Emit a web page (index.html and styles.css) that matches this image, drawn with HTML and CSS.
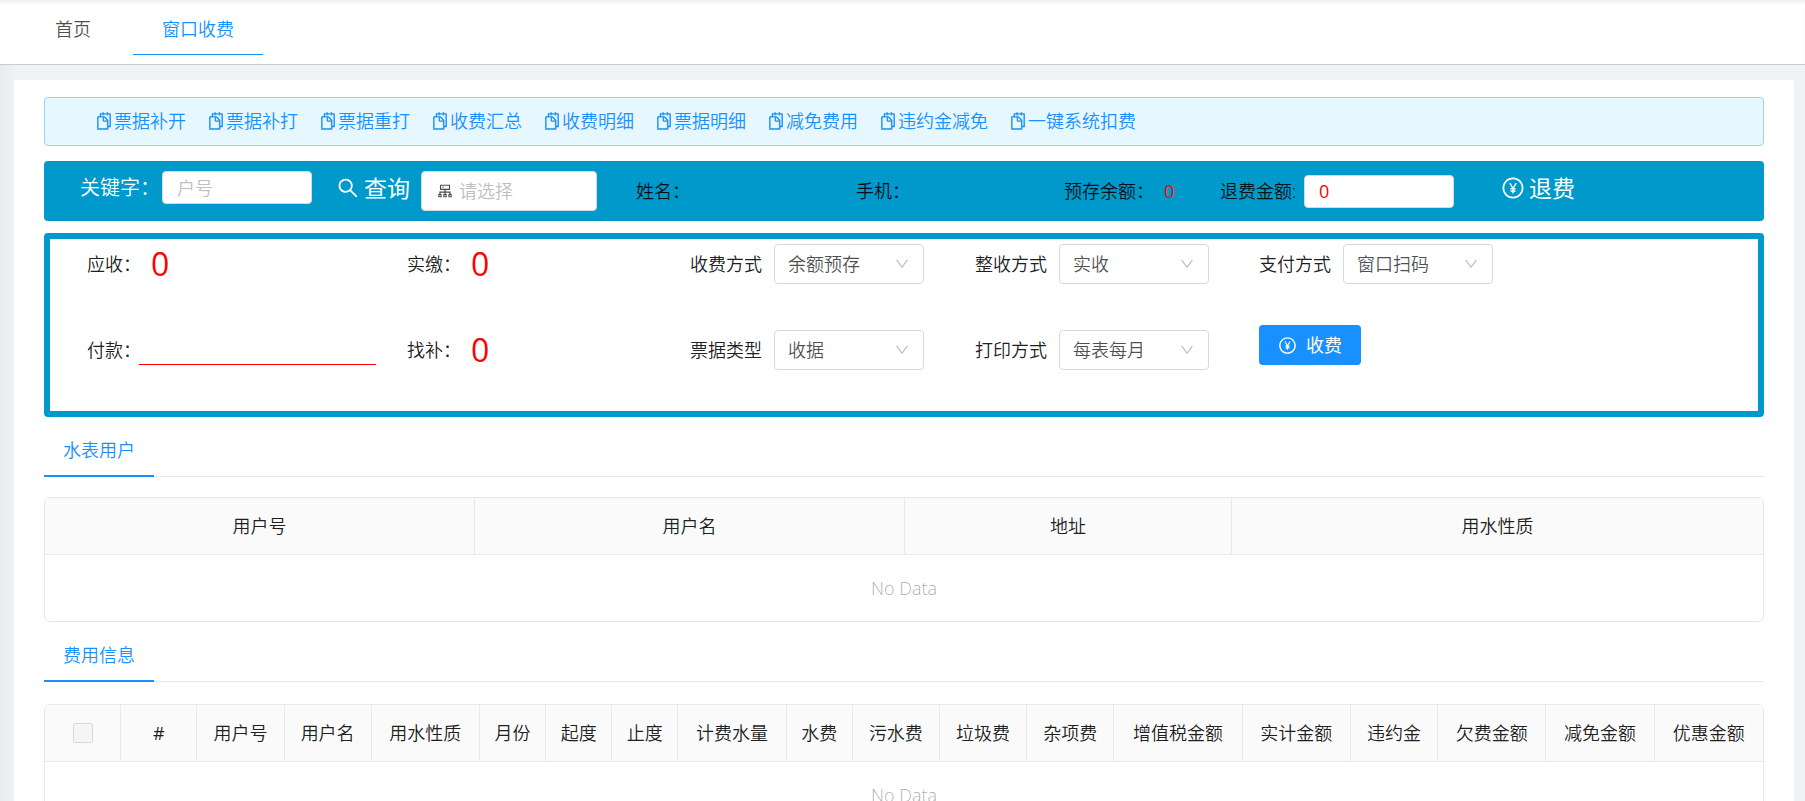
FILE: index.html
```html
<!DOCTYPE html>
<html lang="zh-CN">
<head>
<meta charset="utf-8">
<meta name="viewport" content="width=device-width, initial-scale=1">
<title>窗口收费</title>
<link rel="stylesheet" href="styles.css">
</head>
<body>
<svg class="sprite" aria-hidden="true">
  <symbol id="i-snippets" viewBox="0 0 1024 1024"><path d="M832 112H724V72c0-4.400-3.600-8-8-8h-56c-4.400 0-8 3.600-8 8v40H500V72c0-4.400-3.600-8-8-8h-56c-4.400 0-8 3.600-8 8v40H320c-17.700 0-32 14.300-32 32v120h-96c-17.700 0-32 14.300-32 32v632c0 17.700 14.300 32 32 32h512c17.700 0 32-14.300 32-32v-96h96c17.700 0 32-14.300 32-32V144c0-17.700-14.300-32-32-32zM664 888H232V336h218v174c0 22.100 17.900 40 40 40h174v338zm0-402H514V336h.2L664 485.800v.2zm128 274h-56V456L544 264H360v-80h68v32c0 4.400 3.600 8 8 8h56c4.400 0 8-3.600 8-8v-32h152v32c0 4.400 3.600 8 8 8h56c4.400 0 8-3.600 8-8v-32h68v576z"/></symbol>
  <symbol id="i-search" viewBox="0 0 1024 1024"><path d="M909.600 854.500L649.900 594.800C690.200 542.700 712 479 712 412c0-80.200-31.300-155.400-87.900-212.100-56.600-56.700-132-87.900-212.100-87.900s-155.500 31.300-212.100 87.900C143.200 256.500 112 331.800 112 412c0 80.100 31.300 155.500 87.900 212.100C256.500 680.800 331.800 712 412 712c67 0 130.600-21.800 182.700-62l259.700 259.600a8.200 8.200 0 0 0 11.600 0l43.600-43.500a8.200 8.200 0 0 0 0-11.600zM570.400 570.400C528 612.700 471.800 636 412 636s-116-23.300-158.400-65.600C211.300 528 188 471.800 188 412s23.300-116.100 65.600-158.400C296 211.300 352.200 188 412 188s116.100 23.200 158.400 65.600S636 352.200 636 412s-23.300 116.100-65.600 158.400z"/></symbol>
  <symbol id="i-cluster" viewBox="0 0 1024 1024"><path fill-rule="evenodd" d="M888 680h-54V540H546v-92h238c8.800 0 16-7.200 16-16V168c0-8.800-7.200-16-16-16H240c-8.800 0-16 7.200-16 16v264c0 8.800 7.200 16 16 16h238v92H190v140h-54c-4.400 0-8 3.600-8 8v176c0 4.400 3.600 8 8 8h176c4.400 0 8-3.600 8-8V688c0-4.400-3.600-8-8-8h-54v-72h220v72h-54c-4.400 0-8 3.600-8 8v176c0 4.400 3.600 8 8 8h176c4.400 0 8-3.600 8-8V688c0-4.400-3.600-8-8-8h-54v-72h220v72h-54c-4.400 0-8 3.600-8 8v176c0 4.400 3.600 8 8 8h176c4.400 0 8-3.600 8-8V688c0-4.400-3.600-8-8-8zM192 744h64v64h-64zM480 744h64v64h-64zM768 744h64v64h-64zM288 384V216h448v168H288z"/><circle cx="400" cy="300" r="40"/></symbol>
  <symbol id="i-pay" viewBox="0 0 1024 1024"><path d="M512 64C264.600 64 64 264.600 64 512s200.600 448 448 448 448-200.600 448-448S759.400 64 512 64zm0 820c-205.400 0-372-166.600-372-372s166.600-372 372-372 372 166.600 372 372-166.600 372-372 372z"/><path d="M372 300l140 226 140-226M512 526v218M404 546h216M404 640h216" fill="none" stroke="currentColor" stroke-width="58"/></symbol>
  <symbol id="i-down" viewBox="0 0 1024 1024"><path d="M884 256h-75c-5.100 0-9.900 2.500-12.900 6.600L512 654.200 227.900 262.600c-3-4.100-7.800-6.600-12.900-6.600h-75c-6.500 0-10.300 7.400-6.500 12.700l352.600 486.100c12.800 17.600 39 17.600 51.700 0l352.600-486.100c3.900-5.300.1-12.700-6.400-12.700z"/></symbol>
</svg>

<header class="topbar">
  <nav class="page-tabs">
    <a class="page-tab" href="#home">首页</a>
    <a class="page-tab is-active" href="#cashier">窗口收费</a>
  </nav>
</header>

<main class="content">
  <section class="card">
    <nav class="toolbar">
      <a class="tool" href="#t1"><svg class="icon-tool"><use href="#i-snippets"/></svg>票据补开</a>
      <a class="tool" href="#t2"><svg class="icon-tool"><use href="#i-snippets"/></svg>票据补打</a>
      <a class="tool" href="#t3"><svg class="icon-tool"><use href="#i-snippets"/></svg>票据重打</a>
      <a class="tool" href="#t4"><svg class="icon-tool"><use href="#i-snippets"/></svg>收费汇总</a>
      <a class="tool" href="#t5"><svg class="icon-tool"><use href="#i-snippets"/></svg>收费明细</a>
      <a class="tool" href="#t6"><svg class="icon-tool"><use href="#i-snippets"/></svg>票据明细</a>
      <a class="tool" href="#t7"><svg class="icon-tool"><use href="#i-snippets"/></svg>减免费用</a>
      <a class="tool" href="#t8"><svg class="icon-tool"><use href="#i-snippets"/></svg>违约金减免</a>
      <a class="tool" href="#t9"><svg class="icon-tool"><use href="#i-snippets"/></svg>一键系统扣费</a>
    </nav>

    <form class="query">
      <div class="query-item is-short">
        <label class="keyword-label" for="keyword">关键字：</label>
        <input class="input keyword-input" id="keyword" type="text" placeholder="户号">
      </div>
      <button class="action is-short" type="button"><svg class="icon-action"><use href="#i-search"/></svg>查询</button>
      <label class="picker"><svg class="icon-picker"><use href="#i-cluster"/></svg><input class="picker-input" type="text" placeholder="请选择" aria-label="请选择"></label>
      <div class="query-item">姓名：</div>
      <div class="query-item">手机：</div>
      <div class="query-item">预存余额：<span class="balance">0</span></div>
      <div class="query-item">
        <label class="refund-label" for="refund">退费金额:</label>
        <input class="input refund-input" id="refund" type="text" value="0">
      </div>
      <button class="action is-short" type="button"><svg class="icon-action"><use href="#i-pay"/></svg>退费</button>
    </form>

    <form class="payment">
      <div class="field">应收：<output class="amount">0</output></div>
      <div class="field">实缴：<output class="amount">0</output></div>
      <div class="field"><label class="field-label" for="s1">收费方式</label><span class="select-box"><select class="select" id="s1"><option>余额预存</option></select><svg class="icon-down"><use href="#i-down"/></svg></span></div>
      <div class="field"><label class="field-label" for="s2">整收方式</label><span class="select-box"><select class="select" id="s2"><option>实收</option></select><svg class="icon-down"><use href="#i-down"/></svg></span></div>
      <div class="field"><label class="field-label" for="s3">支付方式</label><span class="select-box"><select class="select" id="s3"><option>窗口扫码</option></select><svg class="icon-down"><use href="#i-down"/></svg></span></div>

      <div class="field"><label class="paid-label" for="paid">付款：</label><input class="paid-input" id="paid" type="text"></div>
      <div class="field">找补：<output class="amount">0</output></div>
      <div class="field"><label class="field-label" for="s4">票据类型</label><span class="select-box"><select class="select" id="s4"><option>收据</option></select><svg class="icon-down"><use href="#i-down"/></svg></span></div>
      <div class="field"><label class="field-label" for="s5">打印方式</label><span class="select-box"><select class="select" id="s5"><option>每表每月</option></select><svg class="icon-down"><use href="#i-down"/></svg></span></div>
      <div class="submit-cell"><button class="submit" type="button"><svg class="icon-submit"><use href="#i-pay"/></svg>收费</button></div>
    </form>

    <div class="section-tabs"><a class="section-tab" href="#meters">水表用户</a></div>
    <div class="table-frame" id="meters">
      <table class="table">
        <colgroup><col class="w-meter" span="2"><col class="w-address"><col class="w-nature"></colgroup>
        <thead><tr><th>用户号</th><th>用户名</th><th>地址</th><th>用水性质</th></tr></thead>
        <tbody><tr><td colspan="4">No Data</td></tr></tbody>
      </table>
    </div>

    <div class="section-tabs"><a class="section-tab" href="#fees">费用信息</a></div>
    <div class="table-frame" id="fees">
      <table class="table">
        <colgroup>
          <col class="w-mark" span="2"><col class="w-3" span="2"><col class="w-4"><col class="w-2" span="3"><col class="w-4"><col class="w-2"><col class="w-3" span="3"><col class="w-5"><col class="w-4"><col class="w-3"><col class="w-4" span="3">
        </colgroup>
        <thead><tr>
          <th><input class="check" type="checkbox" disabled aria-label="全选"></th><th class="index">#</th><th>用户号</th><th>用户名</th><th>用水性质</th><th>月份</th><th>起度</th><th>止度</th><th>计费水量</th><th>水费</th><th>污水费</th><th>垃圾费</th><th>杂项费</th><th>增值税金额</th><th>实计金额</th><th>违约金</th><th>欠费金额</th><th>减免金额</th><th>优惠金额</th>
        </tr></thead>
        <tbody><tr><td colspan="19">No Data</td></tr></tbody>
      </table>
    </div>
  </section>
</main>
</body>
</html>
```

FILE: styles.css
```css
* { box-sizing: border-box; }

body {
  margin: 0;
  height: 100vh;
  overflow: hidden;
  display: flex;
  flex-direction: column;
  background: #f0f2f5;
  color: rgba(0, 0, 0, 0.9);
  font: 350 18px/28px "Open Sans", "Noto Sans CJK SC", sans-serif;
  white-space: nowrap;
}

a { color: inherit; text-decoration: none; }
input, select, button { font: inherit; color: inherit; margin: 0; }
svg { fill: currentColor; flex: none; }
.sprite { display: none; }

/* page tabs */
.topbar {
  flex: none;
  background: #fff;
  border-bottom: 1px solid #ccc;
  box-shadow: inset 0 4px 4px -2px rgba(0, 0, 0, 0.08);
  padding: 5px 28px 9px;
}
.page-tabs { display: flex; gap: 15px; }
.page-tab {
  height: 50px;
  padding: 0 27px;
  line-height: 48px;
  color: rgba(0, 0, 0, 0.7);
  border-bottom: 1px solid transparent;
}
.page-tab.is-active { padding: 0 29px; color: #1890ff; border-color: #1890ff; }

/* content */
.content {
  flex: 1;
  min-height: 0;
  padding: 15px 11px 0 14px;
  background: linear-gradient(90deg, #e8eaed, #f0f2f5 14px);
}
.card {
  background: #fff;
  border-radius: 2px;
  padding: 17px 30px 30px;
}

.toolbar {
  display: flex;
  gap: 20px;
  padding: 9px 49px 10px;
  border: 1px solid #91d5ff;
  border-radius: 4px;
  background: #e6f7ff;
  color: #1890ff;
}
.tool { display: flex; align-items: center; }
.icon-tool { width: 20px; height: 20px; }

/* customer query bar */
.query {
  display: grid;
  grid-template-columns: 256fr 85fr 215fr 220fr 208fr 156fr 281fr 263fr;
  align-items: start;
  margin-top: 15px;
  padding: 10px 0 10px 36px;
  border-radius: 4px;
  background: #09c;
}
.query > * { min-width: 0; }
.query-item { display: flex; align-items: center; height: 40px; }
.query .is-short { height: 33px; }
.input {
  width: 150px;
  height: 33px;
  padding: 0 14px;
  border: 1px solid #d9d9d9;
  border-radius: 4px;
  background: #fff;
}
.input::placeholder, .picker-input::placeholder { color: #bfbfbf; opacity: 1; }
.keyword-label { width: 82px; font-size: 20px; color: #fff; }
.refund-label { width: 84px; }
.balance { padding-left: 10px; color: #f00; font-weight: 400; }
.refund-input { color: #f00; font-weight: 400; }
.action {
  display: flex;
  align-items: center;
  gap: 4px;
  padding: 0;
  border: 0;
  background: none;
  color: #fff;
  font-size: 23px;
  font-weight: 400;
}
.icon-action { width: 24px; height: 24px; }
.picker {
  display: flex;
  align-items: center;
  gap: 5px;
  width: 176px;
  height: 40px;
  padding: 0 14px;
  border: 1px solid #d9d9d9;
  border-radius: 4px;
  background: #fff;
}
.icon-picker { width: 18px; height: 18px; color: rgba(0, 0, 0, 0.7); }
.picker-input { width: 100%; min-width: 0; padding: 0; border: 0; background: none; }

/* payment form */
.payment {
  display: grid;
  grid-template-columns: 320fr 283fr 285fr 284fr 499fr;
  row-gap: 46px;
  margin-top: 12px;
  padding: 5px 0 41px 37px;
  border: 6px solid #09c;
  border-radius: 4px;
}
.field { display: flex; align-items: center; min-width: 0; height: 40px; }
.field-label { width: 84px; }
.paid-label { width: 52px; }
.amount { padding-left: 10px; color: #f00; font-size: 32px; font-weight: 400; }
.paid-input {
  width: 237px;
  height: 30px;
  padding: 0;
  border: 0;
  border-bottom: 1px solid #f00;
  background: none;
}
.select-box { display: grid; align-items: center; width: 150px; }
.select-box > * { grid-area: 1 / 1; }
.select {
  appearance: none;
  width: 100%;
  height: 40px;
  padding: 0 13px;
  border: 1px solid #d9d9d9;
  border-radius: 4px;
  background: #fff;
  color: rgba(0, 0, 0, 0.7);
}
.icon-down {
  width: 16px;
  height: 16px;
  margin-right: 14px;
  justify-self: end;
  color: rgba(0, 0, 0, 0.25);
  pointer-events: none;
}
.submit-cell { height: 40px; margin-top: -5px; }
.submit {
  display: flex;
  align-items: center;
  gap: 9px;
  height: 40px;
  padding: 0 19px;
  border: 0;
  border-radius: 4px;
  background: #1890ff;
  color: #fff;
  font-weight: 400;
}
.icon-submit { width: 19px; height: 19px; }

/* section tabs and tables */
.section-tabs {
  display: flex;
  margin: 6px 0 20px;
  box-shadow: inset 0 -1px #e8e8e8;
}
.table-frame + .section-tabs { margin-bottom: 22px; }
.section-tab {
  padding: 13px 19px 11px;
  border-bottom: 2px solid #1890ff;
  color: #1890ff;
}
.table-frame {
  border: 1px solid #e8e8e8;
  border-radius: 5px;
  overflow: hidden;
}
.table { width: 100%; table-layout: fixed; border-collapse: separate; border-spacing: 0; }
.table th {
  height: 57px;
  padding: 0;
  border-right: 1px solid #e8e8e8;
  border-bottom: 1px solid #e8e8e8;
  background: #fafafa;
  font-weight: 350;
  text-align: center;
}
.table th:last-child { border-right: 0; }
.table .index { font-weight: 400; }
.table td { height: 66px; padding: 0; color: rgba(0, 0, 0, 0.35); text-align: center; }
.w-meter { width: 430px; }
.w-address { width: 327px; }
.w-nature { width: 531px; }
.w-mark { width: 76px; }
.w-2 { width: 66px; }
.w-3 { width: 87px; }
.w-4 { width: 108px; }
.w-5 { width: 128px; }
.check {
  appearance: none;
  display: block;
  width: 20px;
  height: 20px;
  margin: 0 auto;
  border: 1px solid #d9d9d9;
  border-radius: 2px;
  background: #f5f5f5;
}
```
